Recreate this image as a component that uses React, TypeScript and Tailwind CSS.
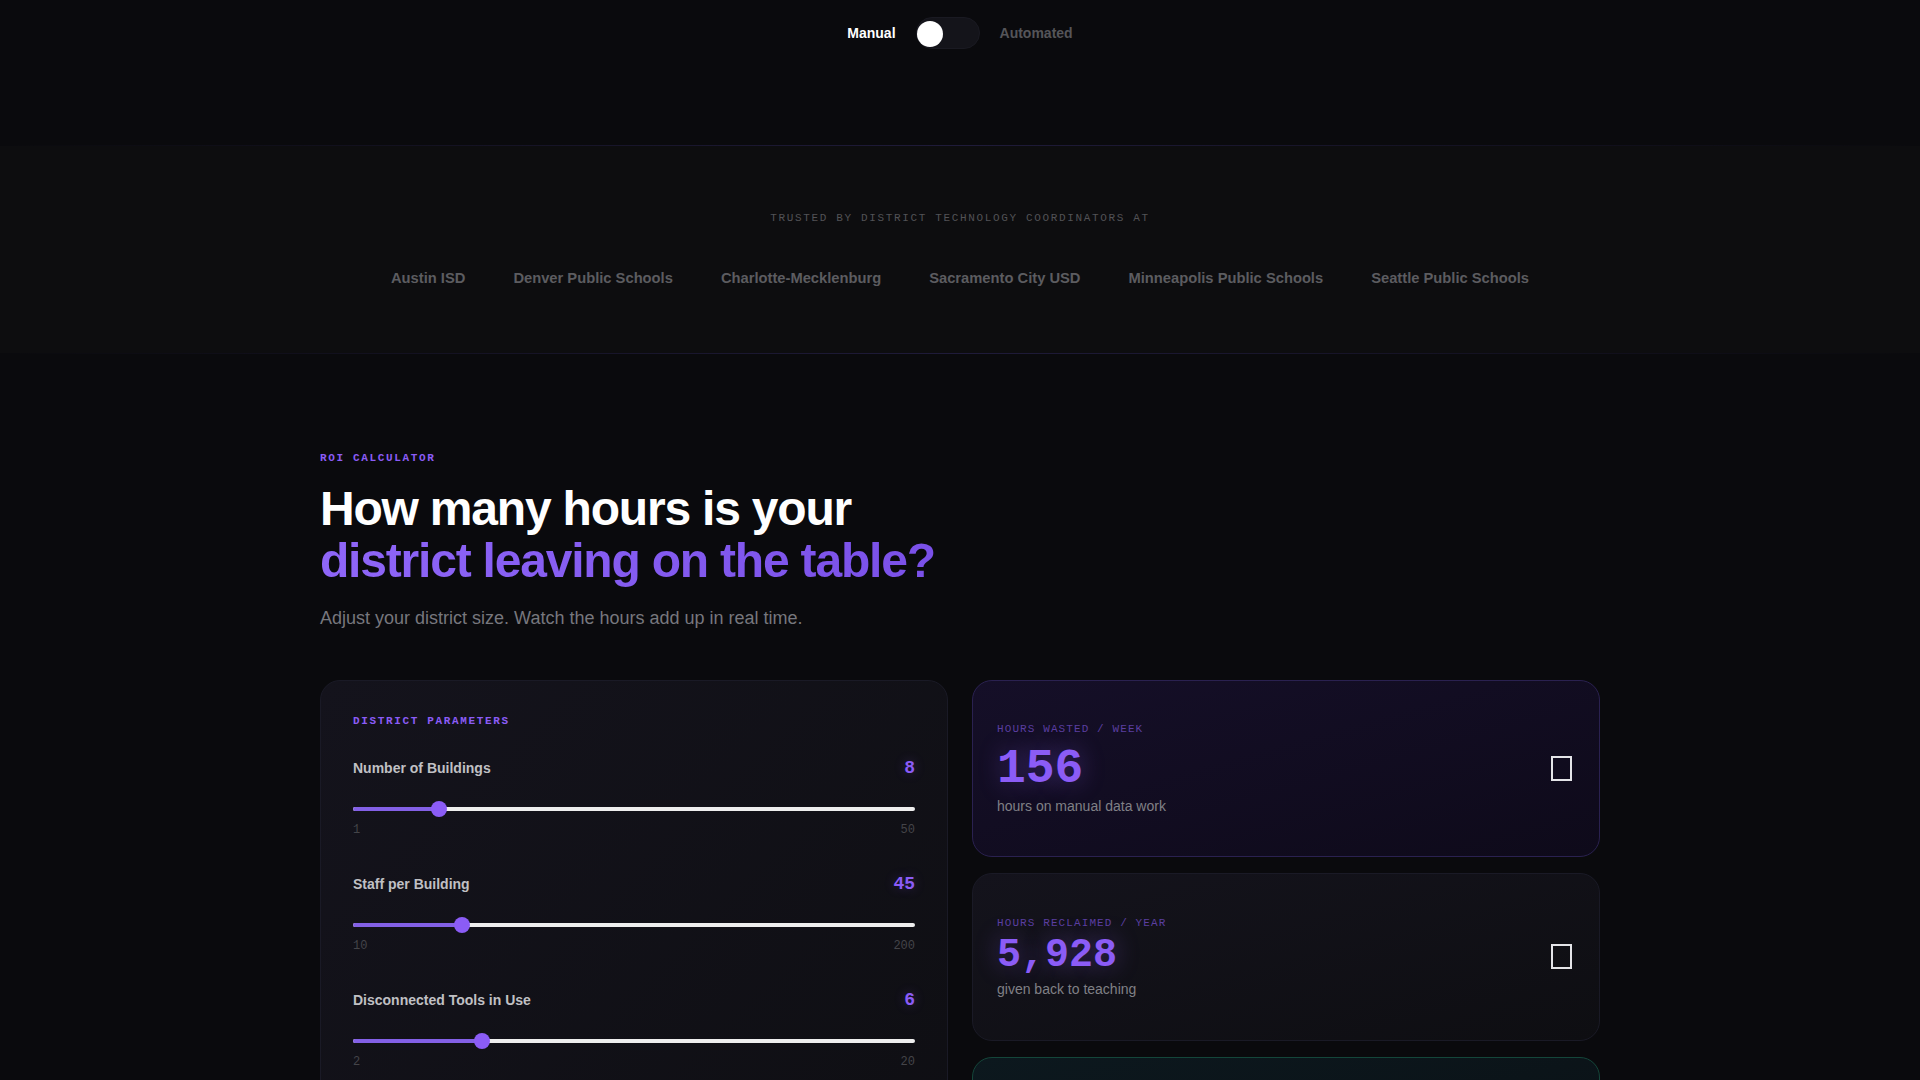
const mono = "font-['Liberation_Mono',monospace]";

const districts = [
  'Austin ISD',
  'Denver Public Schools',
  'Charlotte-Mecklenburg',
  'Sacramento City USD',
  'Minneapolis Public Schools',
  'Seattle Public Schools',
];

const params = [
  { label: 'Number of Buildings', value: 8, min: 1, max: 50 },
  { label: 'Staff per Building', value: 45, min: 10, max: 200 },
  { label: 'Disconnected Tools in Use', value: 6, min: 2, max: 20 },
];

const ParamSlider = ({ label, value, min, max }: { label: string; value: number; min: number; max: number }) => {
  const pct = ((value - min) / (max - min)) * 100;
  return (
    <div className="mb-8">
      <div className="mb-[15px] flex items-center justify-between">
        <span className="text-sm font-semibold text-[#c0c0c4]">{label}</span>
        <span className={`${mono} text-lg font-bold text-[#8b5cf6] [text-shadow:0_0_12px_rgba(139,92,246,0.3)]`}>{value}</span>
      </div>
      <div className="flex h-6 items-center">
        <div className="relative h-1 w-full rounded-sm bg-[#eeeeee]">
          <div className="h-full rounded-sm bg-[#8360e6]" style={{ width: `${pct}%` }} />
          <div
            className="absolute top-1/2 h-4 w-4 -translate-y-1/2 rounded-full bg-[#8b5cf6]"
            style={{ left: `calc(${pct / 100} * (100% - 16px))` }}
          />
        </div>
      </div>
      <div className={`${mono} mt-px flex justify-between text-xs text-[#444449]`}>
        <span>{min}</span>
        <span>{max}</span>
      </div>
    </div>
  );
};

const StatCard = ({
  label,
  value,
  note,
  size,
  className,
}: {
  label: string;
  value: string;
  note: string;
  size: string;
  className: string;
}) => (
  <div className={`flex items-center justify-between rounded-[20px] border px-6 ${className}`}>
    <div>
      <div className={`${mono} text-[11px] tracking-[0.1em] text-[#5b3fa0]`}>{label}</div>
      <div className={`${mono} ${size} leading-none font-bold text-[#8b5cf6] [text-shadow:0_0_24px_rgba(139,92,246,0.4)]`}>{value}</div>
      <div className="mt-[3px] text-sm text-[#808086]">{note}</div>
    </div>
    {/* missing emoji glyph box from the original */}
    <div className="mr-[3px] mb-px h-[25px] w-[21px] border-2 border-[#e4e4e8]" />
  </div>
);

export default function App() {
  return (
    <div className="h-screen overflow-hidden bg-[#0a0a0d] font-['Liberation_Sans',Arial,sans-serif]">
      <div className="flex h-[145px] justify-center pt-[17px]">
        <div className="flex h-8 items-center gap-5 text-sm font-semibold">
          <span className="text-white">Manual</span>
          <div className="flex h-8 w-16 items-center rounded-full border border-[#1a1a22] bg-[#14141a]">
            <div className="mt-[2px] h-[26px] w-[26px] rounded-full bg-white" />
          </div>
          <span className="text-[#555559]">Automated</span>
        </div>
      </div>

      <div className="h-px bg-gradient-to-r from-transparent via-[#1f1b3a] to-transparent" />
      <section className="flex h-[207px] flex-col items-center bg-[#0d0d0f] pt-[64px]">
        <p className={`${mono} text-[11px] tracking-[0.15em] text-[#525256]`}>TRUSTED BY DISTRICT TECHNOLOGY COORDINATORS AT</p>
        <div className="mt-[40px] flex gap-12 text-[14.72px] font-semibold text-[#5c5c60]">
          {districts.map((name) => (
            <span key={name}>{name}</span>
          ))}
        </div>
      </section>
      <div className="h-px bg-gradient-to-r from-transparent via-[#1f1b3a] to-transparent" />

      <main className="mx-auto w-[1280px] pt-[96px]">
        <p className={`${mono} text-[11px] font-bold tracking-[0.15em] text-[#8b5cf6]`}>ROI CALCULATOR</p>
        <h2 className="mt-4 text-5xl leading-[1.1] font-bold tracking-[-0.025em] text-white">
          How many hours is your
          <br />
          <span className="bg-gradient-to-r from-[#8f66f8] to-[#7a50e8] bg-clip-text text-transparent">district leaving on the table?</span>
        </h2>
        <p className="mt-4 text-lg text-[#77777d]">Adjust your district size. Watch the hours add up in real time.</p>

        <div className="mt-12 grid grid-cols-2 gap-6">
          <div className="h-[600px] rounded-[20px] border border-[#1a1a26] bg-gradient-to-br from-[#14131c] to-[#0e0e12] p-8">
            <p className={`${mono} mb-6 text-[11px] font-bold tracking-[0.15em] text-[#8b5cf6]`}>DISTRICT PARAMETERS</p>
            {params.map((p) => (
              <ParamSlider key={p.label} {...p} />
            ))}
          </div>
          <div className="flex flex-col gap-4">
            <StatCard
              label="HOURS WASTED / WEEK"
              value="156"
              note="hours on manual data work"
              size="mt-2 text-5xl"
              className="h-[177px] border-[#2a2150] bg-gradient-to-br from-[#150f28] to-[#0e0a1a]"
            />
            <StatCard
              label="HOURS RECLAIMED / YEAR"
              value="5,928"
              note="given back to teaching"
              size="mt-[5px] text-[40px]"
              className="h-[168px] border-[#1a1a26] bg-gradient-to-br from-[#14131c] to-[#0e0e12]"
            />
            <div className="h-[168px] rounded-[20px] border border-[#14463a] bg-gradient-to-br from-[#0c181e] to-[#0a1014]" />
          </div>
        </div>
      </main>
    </div>
  );
}
